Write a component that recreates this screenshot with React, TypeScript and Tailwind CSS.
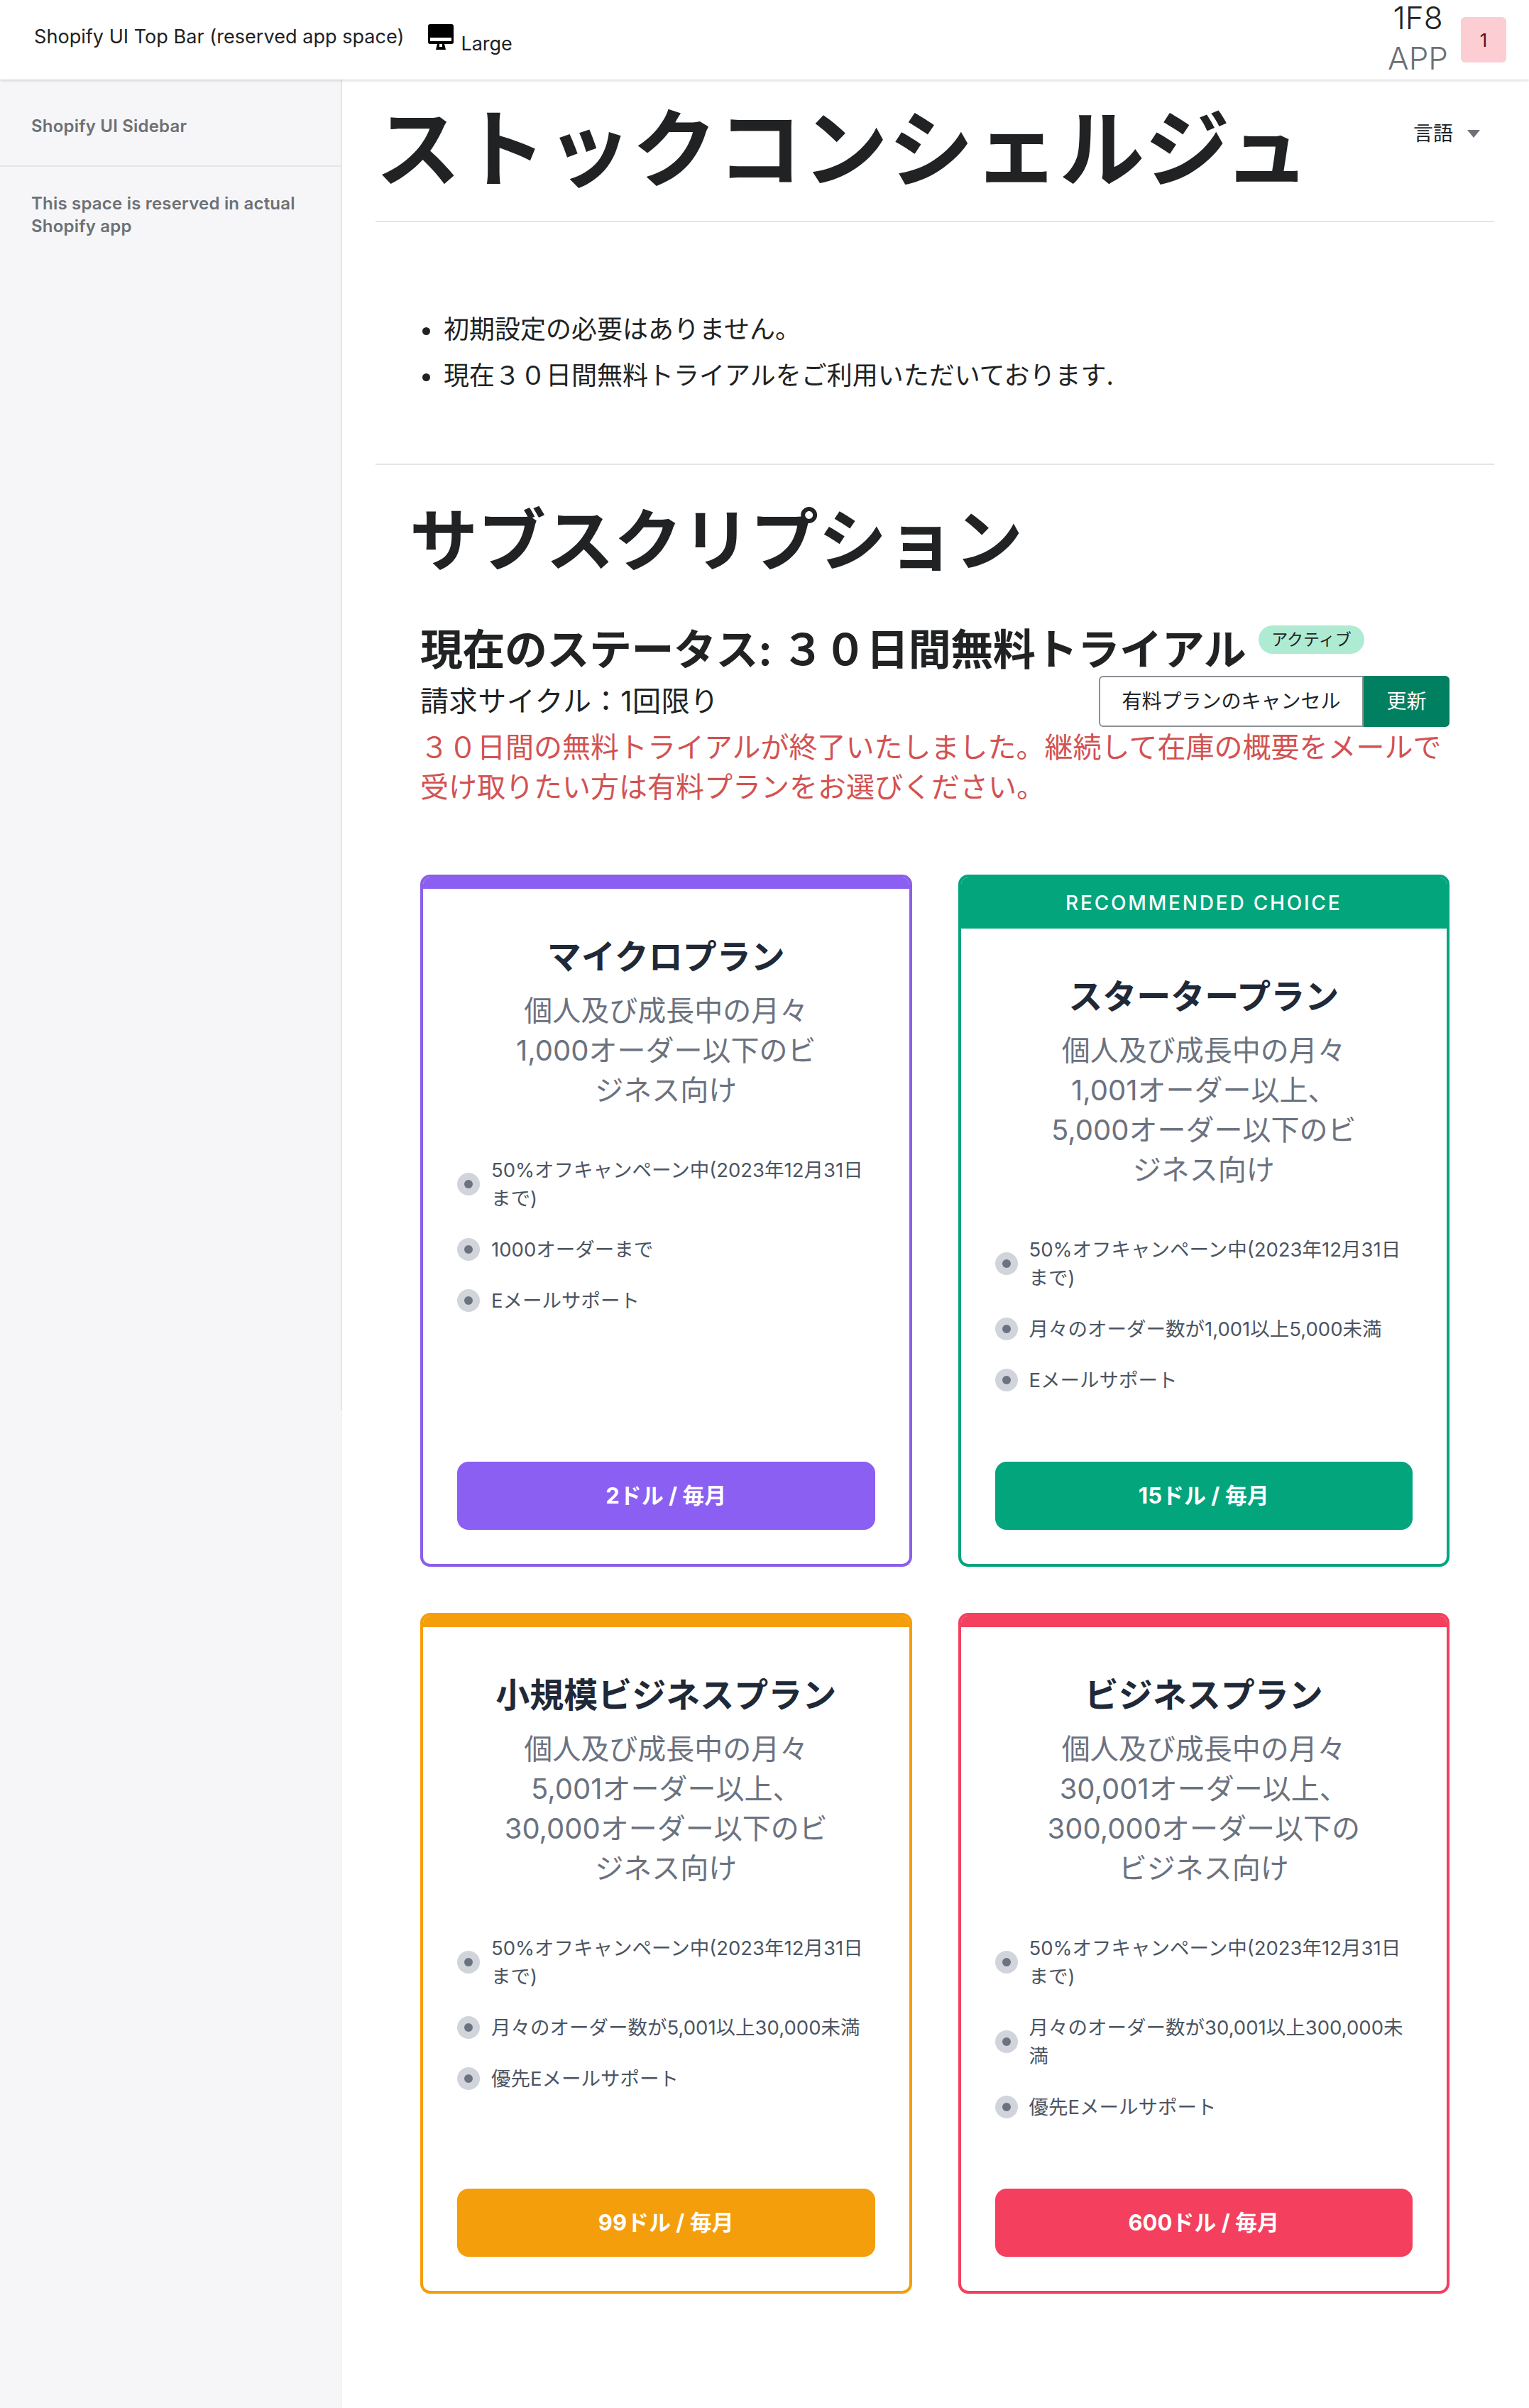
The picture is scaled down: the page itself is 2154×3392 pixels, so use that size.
const plans = [
  {
    name: "マイクロプラン",
    desc: "個人及び成長中の月々1,000オーダー以下のビジネス向け",
    features: ["50%オフキャンペーン中(2023年12月31日まで)", "1000オーダーまで", "Eメールサポート"],
    price: "2ドル / 毎月",
    border: "border-[#8b5fe8]",
    bg: "bg-[#8b5ff2]",
  },
  {
    name: "スタータープラン",
    desc: "個人及び成長中の月々1,001オーダー以上、5,000オーダー以下のビジネス向け",
    features: ["50%オフキャンペーン中(2023年12月31日まで)", "月々のオーダー数が1,001以上5,000未満", "Eメールサポート"],
    price: "15ドル / 毎月",
    border: "border-[#03a57d]",
    bg: "bg-[#03a57d]",
    label: "Recommended choice",
  },
  {
    name: "小規模ビジネスプラン",
    desc: "個人及び成長中の月々5,001オーダー以上、30,000オーダー以下のビジネス向け",
    features: ["50%オフキャンペーン中(2023年12月31日まで)", "月々のオーダー数が5,001以上30,000未満", "優先Eメールサポート"],
    price: "99ドル / 毎月",
    border: "border-[#f59e0b]",
    bg: "bg-[#f59e0b]",
  },
  {
    name: "ビジネスプラン",
    desc: "個人及び成長中の月々30,001オーダー以上、300,000オーダー以下のビジネス向け",
    features: ["50%オフキャンペーン中(2023年12月31日まで)", "月々のオーダー数が30,001以上300,000未満", "優先Eメールサポート"],
    price: "600ドル / 毎月",
    border: "border-[#f43f5e]",
    bg: "bg-[#f43f5e]",
  },
]

function PlanCard({ plan }: { plan: (typeof plans)[number] }) {
  return (
    <div className={`flex flex-col rounded-[14px] border-[4px] bg-white overflow-hidden ${plan.border}`}>
      {plan.label ? (
        <div className={`flex h-[72px] items-center justify-center text-[28px] font-medium uppercase tracking-[2.8px] text-white ${plan.bg}`}>
          {plan.label}
        </div>
      ) : (
        <div className={`h-[16px] ${plan.bg}`} />
      )}
      <div className="flex flex-1 flex-col px-[48px] pb-[48px] pt-[64px]">
        <h3 className="text-center text-[48px] font-bold leading-[64px] text-[#1f2937]">{plan.name}</h3>
        <p className="mx-auto mt-[16px] w-[462px] text-center text-[40px] leading-[56px] text-[#6b7280]">{plan.desc}</p>
        <ul className="mt-[64px] flex flex-col gap-[32px]">
          {plan.features.map((f) => (
            <li key={f} className="flex items-center gap-[16px]">
              <span className="flex h-[32px] w-[32px] shrink-0 items-center justify-center rounded-full bg-[#d1d5db]">
                <span className="h-[12px] w-[12px] rounded-full bg-[#6b7280]" />
              </span>
              <span className="text-[27.5px] leading-[40px] text-[#4b5563]">{f}</span>
            </li>
          ))}
        </ul>
        <div className="mt-auto pt-[95px]">
          <div className={`flex h-[96px] items-center justify-center rounded-[16px] text-[31px] font-bold text-white ${plan.bg}`}>
            {plan.price}
          </div>
        </div>
      </div>
    </div>
  )
}

export default function App() {
  return (
    <div className="flex min-h-[3392px] flex-col bg-white font-['Inter','Noto_Sans_CJK_JP',sans-serif] text-[#202223]">
      <header className="relative z-10 flex h-[112px] shrink-0 items-center justify-between pl-[48px] pr-[32px] shadow-[0_1px_4px_rgba(0,0,0,0.2)]">
        <div className="flex items-center pb-[8px]">
          <span className="text-[27.1px]">Shopify UI Top Bar (reserved app space)</span>
          <svg viewBox="0 0 36 36" className="ml-[34px] h-[36px] w-[36px]">
            <path d="M3 0h30a3 3 0 0 1 3 3v22a3 3 0 0 1-3 3H3a3 3 0 0 1-3-3V3a3 3 0 0 1 3-3z" fill="#000" />
            <rect x="3" y="19" width="30" height="5" fill="#fff" />
            <path d="M13 28h10l2 8H11z" fill="#000" />
            <rect x="16" y="28" width="4" height="4" fill="#fff" />
          </svg>
          <span className="ml-[10px] mt-[20px] text-[27px]">Large</span>
        </div>
        <div className="flex items-center gap-[18px]">
          <div className="flex flex-col items-center pb-[4px] text-[44px] font-light leading-[57px]">
            <span>1F8</span>
            <span className="text-[#6d7175]">APP</span>
          </div>
          <div className="flex h-[64px] w-[64px] items-center justify-center rounded-[6px] bg-[#fccdd3] text-[26px] text-[#5f0f1c]">1</div>
        </div>
      </header>

      <div className="flex flex-1">
        <aside className="flex w-[482px] shrink-0 flex-col bg-[#f6f6f8] text-[24px] font-semibold leading-[32px] tracking-[0.2px] text-[#6d7175]">
          <div className="h-[1874px] border-r-2 border-[#e4e5e7]">
            <div className="flex h-[123px] items-center border-b-2 border-[#e4e5e7] px-[44px] pt-[10px]">Shopify UI Sidebar</div>
            <div className="px-[44px] pt-[36px]">This space is reserved in actual Shopify app</div>
          </div>
          <div className="flex-1 border-r-2 border-[#f3f3f3]" />
        </aside>

        <main className="flex-1 pl-[47px] pr-[49px]">
          <div className="flex h-[201px] items-start justify-between border-b-2 border-[#e4e5e7]">
            <h1 className="mt-[24px] text-[120px] font-bold leading-[150px] tracking-[0.4px]">ストックコンシェルジュ</h1>
            <div className="mr-[20px] mt-[56px] flex items-center gap-[20px] text-[28px] leading-[40px]">
              言語
              <span className="h-0 w-0 border-x-[9px] border-t-[11px] border-x-transparent border-t-[#6d7175]" />
            </div>
          </div>

          <ul className="h-[342px] border-b-2 border-[#e4e5e7] pl-[96px] pt-[119px] text-[36px] leading-[65px]">
            <li className="relative">
              <span className="absolute left-[-30px] top-[29px] h-[11px] w-[11px] rounded-full bg-[#202223]" />
              初期設定の必要はありません。
            </li>
            <li className="relative">
              <span className="absolute left-[-30px] top-[29px] h-[11px] w-[11px] rounded-full bg-[#202223]" />
              現在３０日間無料トライアルをご利用いただいております.
            </li>
          </ul>

          <h2 className="ml-[48px] mt-[42px] text-[96px] font-bold leading-[128px]">サブスクリプション</h2>

          <div className="mx-[63px] mt-[53px]">
            <div className="flex items-start">
              <h3 className="text-[60px] font-bold leading-[74px] tracking-[-0.5px]">現在のステータス: ３０日間無料トライアル</h3>
              <span className="ml-[18px] mt-[3px] flex h-[40px] items-center rounded-full bg-[#aeebd2] px-[18px] text-[23px] leading-none">アクティブ</span>
            </div>
            <div className="flex items-center justify-between">
              <span className="text-[40px] leading-[72px] tracking-[0.6px]">請求サイクル：1回限り</span>
              <div className="flex">
                <div className="flex h-[72px] w-[373px] items-center justify-center rounded-l-[6px] border-2 border-[#8c9196] text-[28px]">有料プランのキャンセル</div>
                <div className="flex h-[72px] w-[121px] items-center justify-center rounded-r-[6px] bg-[#008060] text-[28px] text-white">更新</div>
              </div>
            </div>
            <p className="mt-[1px] text-[40px] leading-[56px] text-[#d25252]">
              ３０日間の無料トライアルが終了いたしました。継続して在庫の概要をメールで受け取りたい方は有料プランをお選びください。
            </p>

            <div className="mt-[95px] grid grid-cols-2 gap-x-[65px] gap-y-[65px]">
              {plans.map((p) => (
                <PlanCard key={p.name} plan={p} />
              ))}
            </div>
          </div>
        </main>
      </div>
    </div>
  )
}
